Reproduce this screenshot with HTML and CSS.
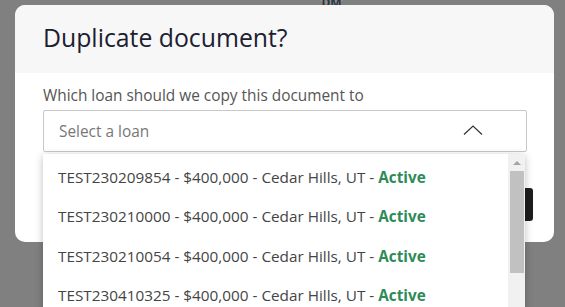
FILE: index.html
```html
<!DOCTYPE html>
<html>
    <head>
        <title>Duplicate document</title>
        <link rel="stylesheet" href="styles.css">
    </head>
    <body>
        <div class="avatar">DM</div>
        <div class="modal">
            <div class="cabecalho">
                <h1>Duplicate document?</h1>
            </div>
            <div class="corpo">
                <p class="rotulo">Which loan should we copy this document to</p>
                <div class="campo">
                    <div class="selecao">
                        <span>Select a loan</span>
                        <svg class="seta" width="20" height="10" viewBox="0 0 20 10">
                            <path d="M1 9.5 L10 1 L19 9.5" fill="none" stroke="#333" stroke-width="1.2"/>
                        </svg>
                    </div>
                    <div class="lista">
                        <div class="itens">
                            <div class="item">TEST230209854 - $400,000 - Cedar Hills, UT - <b>Active</b></div>
                            <div class="item">TEST230210000 - $400,000 - Cedar Hills, UT - <b>Active</b></div>
                            <div class="item">TEST230210054 - $400,000 - Cedar Hills, UT - <b>Active</b></div>
                            <div class="item">TEST230410325 - $400,000 - Cedar Hills, UT - <b>Active</b></div>
                        </div>
                        <div class="rolagem">
                            <div class="flecha"></div>
                            <div class="polegar"></div>
                        </div>
                    </div>
                </div>
                <div class="rodape">
                    <button class="botao">Duplicate</button>
                </div>
            </div>
        </div>
    </body>
</html>
```

FILE: styles.css
```css
body{
    margin: 0;
    height: 307px;
    overflow: hidden;
    background-color: #808080;
    font-family: "Open Sans", sans-serif;
}
.avatar{
    position: absolute;
    left: 315px;
    top: -28px;
    width: 33px;
    height: 33px;
    border-radius: 50%;
    background-color: #8c8c8c;
    color: #2a3540;
    font-size: 12px;
    font-weight: bold;
    text-align: center;
    line-height: 62px;
}
.modal{
    position: relative;
    width: 539px;
    height: 237px;
    margin: 5px 0 0 15px;
    background-color: white;
    border-radius: 10px;
}
.cabecalho{
    height: 68px;
    background-color: #f7f7f7;
    border-radius: 10px 10px 0 0;
    padding-left: 28px;
    display: flex;
    align-items: center;
}
.cabecalho h1{
    margin: 0;
    font-size: 24.8px;
    font-weight: normal;
    color: #1c2030;
    padding-bottom: 4px;
}
.corpo{
    padding: 12px 29px 0 28px;
}
.rotulo{
    margin: 0 0 3px 0;
    font-size: 15.4px;
    color: #555;
    line-height: 22px;
}
.campo{
    position: relative;
}
.selecao{
    height: 40px;
    border: 1px solid #c8c8c8;
    border-radius: 2px;
    display: flex;
    align-items: center;
    justify-content: space-between;
    padding: 0 44px 0 15px;
    width: 423px;
    font-size: 15.4px;
    color: #777;
}
.seta{
    margin-right: -1px;
    margin-top: -2px;
}
.lista{
    position: absolute;
    top: 44px;
    left: 0;
    width: 482px;
    height: 200px;
    background-color: white;
    display: flex;
    box-shadow: 0 2px 8px rgba(0,0,0,0.25);
}
.itens{
    flex: 1;
    padding-top: 4px;
}
.item{
    height: 39.3px;
    line-height: 39.3px;
    padding-left: 15px;
    font-size: 15.3px;
    color: #444;
    white-space: nowrap;
}
.item b{
    color: #2e8b57;
    font-weight: bold;
}
.rolagem{
    width: 17px;
    background-color: #f1f1f1;
    display: flex;
    flex-direction: column;
    align-items: center;
}
.flecha{
    width: 0;
    height: 0;
    margin-top: 7px;
    border-left: 4px solid transparent;
    border-right: 4px solid transparent;
    border-bottom: 4px solid #a3a3a3;
}
.polegar{
    width: 14px;
    height: 102px;
    margin-top: 6px;
    margin-left: 1px;
    background-color: #c1c1c1;
}
.rodape{
    display: flex;
    justify-content: flex-end;
    padding-top: 36px;
    margin-right: -8px;
}
.botao{
    width: 90px;
    height: 33px;
    border: none;
    border-radius: 3px;
    background-color: #1e1e1e;
    color: white;
    font-family: "Open Sans", sans-serif;
}
```
